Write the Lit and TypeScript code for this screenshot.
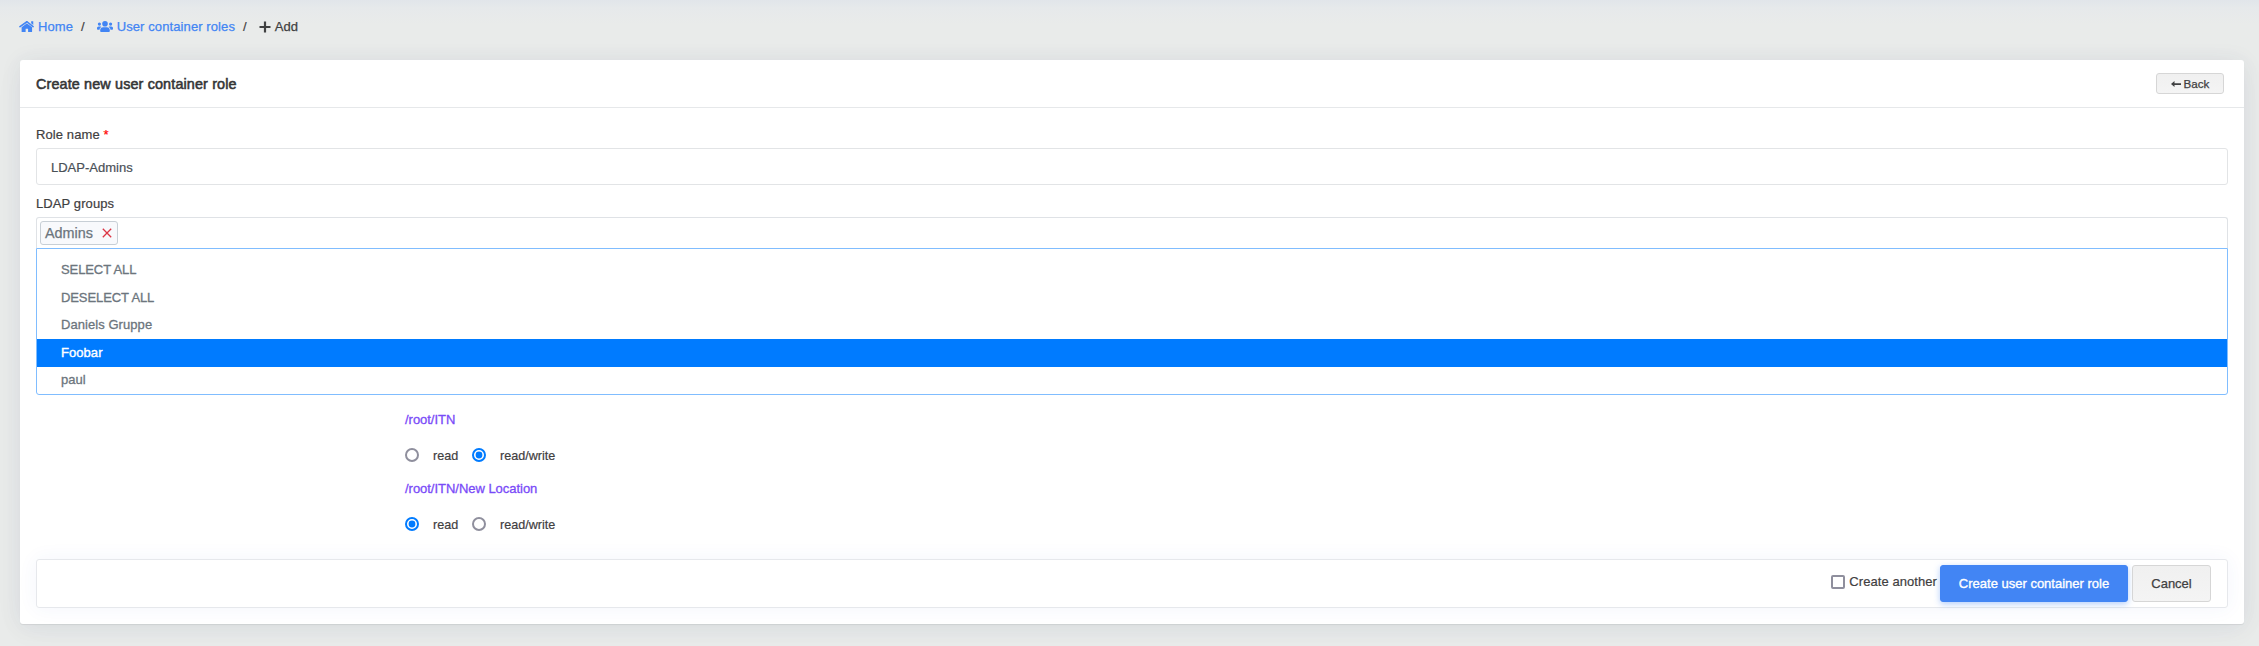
import { LitElement, html, css, svg } from "lit";
import { customElement, state } from "lit/decorators.js";

const home = svg`<path d="M281 149c8-7 18-7 26 0l203 168c4 3 10 3 13-1l22-27c4-4 3-10-1-14L325 96c-22-18-52-18-74 0L7 275c-4 4-5 10-1 14l20 26c4 4 10 5 14 2z"/><path d="M96 308v162c0 9 7 16 16 16h116c8 0 15-7 15-16v-95c0-8 7-15 15-15h60c8 0 15 7 15 15v95c0 9 7 16 15 16h116c9 0 16-7 16-16V308L294 172c-4-3-9-3-12 0zM456 86h56c7 0 11 4 11 11v130l-77-64V97c0-7 3-11 10-11z"/>`;
const users = svg`<circle cx="320" cy="144" r="112"/><circle cx="96" cy="160" r="64"/><circle cx="544" cy="160" r="64"/><path d="M32 256h94c18 0 34 7 46 19-39 22-66 61-71 109H32c-18 0-32-14-32-32v-32c0-35 29-64 64-64zM608 256h-94c-18 0-34 7-46 19 39 22 66 61 71 109h69c18 0 32-14 32-32v-32c0-35-29-64-64-64zM243 288h154c64 0 115 51 115 115v29c0 27-21 48-48 48H176c-27 0-48-21-48-48v-29c0-64 51-115 115-115z"/>`;

@customElement("app-root")
export class AppRoot extends LitElement {
  @state() private options = ["SELECT ALL", "DESELECT ALL", "Daniels Gruppe", "Foobar", "paul"];
  @state() private highlighted = "Foobar";
  @state() private locations = [
    { path: "/root/ITN", mode: "read/write" },
    { path: "/root/ITN/New Location", mode: "read" },
  ];

  static styles = css`
    :host {
      display: block;
      box-sizing: border-box;
      height: 646px;
      padding: 0 15px 22px 20px;
      background: linear-gradient(#e1e5ea 0, #e6e9eb 8px, #e9ebea 24px);
      color: #3f4041;
      font: 13px/20px "Liberation Sans", Arial, sans-serif;
    }
    * { box-sizing: border-box; }
    svg { display: block; fill: currentColor; }
    .crumbs { display: flex; align-items: center; height: 60px; padding-bottom: 7px; margin-left: -1px; }
    .crumb { display: flex; align-items: center; gap: 4px; letter-spacing: 0.1px; -webkit-text-stroke: 0.25px; }
    .crumb svg { stroke: none; }
    .link { color: #4285f4; }
    .sep { padding: 0 12px 0 8px; -webkit-text-stroke: 0.2px; }
    .card {
      height: 564px;
      background: #fff;
      border-radius: 3px;
      box-shadow: 0 7px 35px rgba(40, 60, 110, 0.03), 0 1px 22px rgba(40, 60, 110, 0.07), 0 1px 1px rgba(0, 0, 0, 0.07);
      display: flex;
      flex-direction: column;
    }
    .head { height: 48px; border-bottom: 1px solid #e6e8ea; display: flex; justify-content: space-between; align-items: center; padding: 0 20px 0 16px; flex: none; }
    .title { font-size: 14.4px; letter-spacing: 0.13px; -webkit-text-stroke: 0.55px; color: #343536; }
    .btn { display: flex; align-items: center; justify-content: center; border: 1px solid #d6d6d6; border-radius: 3px; background: linear-gradient(#f0f0f0, #f4f4f4); color: #3f4041; padding: 0; font: inherit; -webkit-text-stroke: 0.25px; }
    .back { width: 68px; height: 21px; font-size: 11.6px; gap: 3px; }
    .body { padding: 17px 16px 0; flex: 1; display: flex; flex-direction: column; }
    .label { height: 20px; margin-bottom: 3px; letter-spacing: 0.1px; -webkit-text-stroke: 0.2px; }
    .req { color: #f00; }
    .input { height: 37px; border: 1px solid #e2e4e6; border-radius: 3px; padding: 2px 14px 0; display: flex; align-items: center; color: #495057; margin-bottom: 9px; -webkit-text-stroke: 0.2px; }
    .select { height: 31px; border: 1px solid #dfe2e6; border-bottom: 0; border-radius: 3px 3px 0 0; padding: 3px; }
    .tag { width: 78px; height: 24px; border: 1px solid #c8cfd6; border-radius: 3px; background: #f8f9fc; color: #6c757d; font-size: 14.4px; display: flex; align-items: center; justify-content: space-between; padding: 0 5px 0 4px; -webkit-text-stroke: 0.25px; }
    .x { color: #dc3545; }
    .menu { height: 147px; border: 1px solid #80bdff; border-radius: 0 0 3px 3px; padding-top: 7.5px; color: #6c757d; -webkit-text-stroke: 0.3px; }
    .opt { height: 27.5px; padding-left: 24px; display: flex; align-items: center; letter-spacing: 0.06px; }
    .caps { letter-spacing: -0.1px; }
    .on { background: #007bff; color: #fff; -webkit-text-stroke: 0.4px; }
    .locs { padding: 15px 0 0 369px; }
    .loc { height: 69px; }
    .path { color: #794af8; height: 20px; letter-spacing: -0.03px; -webkit-text-stroke: 0.3px; }
    .radios { display: flex; align-items: center; margin-top: 15px; height: 20px; font-size: 12.6px; -webkit-text-stroke: 0.2px; }
    .radio { width: 14px; height: 14px; border: 2px solid #8f8f9d; border-radius: 50%; display: flex; margin-right: 14px; flex: none; }
    .checked { border-color: #007bff; padding: 2px; }
    .checked::after { content: ""; flex: 1; border-radius: 50%; background: #007bff; box-shadow: 0 0 0 0.4px #007bff; }
    .name { width: 39px; padding-top: 1px; }
    .foot { margin-top: auto; margin-bottom: 16px; height: 49px; border: 1px solid #e6e8ec; border-radius: 3px; box-shadow: 0 0 20px rgba(50, 90, 200, 0.06); display: flex; justify-content: flex-end; align-items: center; padding: 0 16px 0 0; }
    .box { width: 14px; height: 14px; border: 2px solid #8f8f9d; border-radius: 2px; margin: 0 4px 3px 0; }
    .again { margin: 0 3px 3px 0; letter-spacing: 0.07px; -webkit-text-stroke: 0.2px; }
    .primary { width: 188px; height: 37px; background: #4285f4; border-color: #4285f4; color: #fff; box-shadow: 0 2px 6px rgba(66, 133, 244, 0.4); margin-right: 4px; -webkit-text-stroke: 0.35px; }
    .cancel { width: 79px; height: 37px; }
  `;

  private radio(name: string, mode: string) {
    return html`<span class="radio ${name === mode ? "checked" : ""}"></span><span class="name">${name}</span>`;
  }

  private option(text: string) {
    const caps = text === text.toUpperCase() ? "caps" : "";
    return html`<div class="opt ${caps} ${text === this.highlighted ? "on" : ""}">${text}</div>`;
  }

  render() {
    return html`
      <nav class="crumbs">
        <span class="crumb link"><svg width="15" height="13" viewBox="0 50 550 460">${home}</svg>Home</span>
        <span class="sep">/</span>
        <span class="crumb link"><svg width="16" height="13" viewBox="0 0 640 512">${users}</svg>User container roles</span>
        <span class="sep">/</span>
        <span class="crumb"><svg width="12" height="12" viewBox="0 0 12 12"><path d="M4.9.6h2.2v4.3h4.4v2.2H7.1v4.4H4.9V7.1H.5V4.9h4.4z"/></svg>Add</span>
      </nav>
      <main class="card">
        <header class="head">
          <span class="title">Create new user container role</span>
          <button class="btn back"><svg width="10" height="8" viewBox="0 0 10 8"><path d="M0 4l3.5-3v2.2H10v1.7H3.5V7z"/></svg>Back</button>
        </header>
        <section class="body">
          <div class="label">Role name <span class="req">*</span></div>
          <div class="input">LDAP-Admins</div>
          <div class="label">LDAP groups</div>
          <div class="select"><div class="tag">Admins<svg class="x" width="10" height="10" viewBox="0 0 10 10"><path d="M.8.8l8.4 8.4M9.2.8L.8 9.2" stroke="currentColor" stroke-width="1.3"/></svg></div></div>
          <div class="menu">${this.options.map((o) => this.option(o))}</div>
          <div class="locs">
            ${this.locations.map((l) => html`<div class="loc"><div class="path">${l.path}</div><div class="radios">${this.radio("read", l.mode)}${this.radio("read/write", l.mode)}</div></div>`)}
          </div>
          <footer class="foot">
            <span class="box"></span><span class="again">Create another</span>
            <button class="btn primary">Create user container role</button>
            <button class="btn cancel">Cancel</button>
          </footer>
        </section>
      </main>
    `;
  }
}
